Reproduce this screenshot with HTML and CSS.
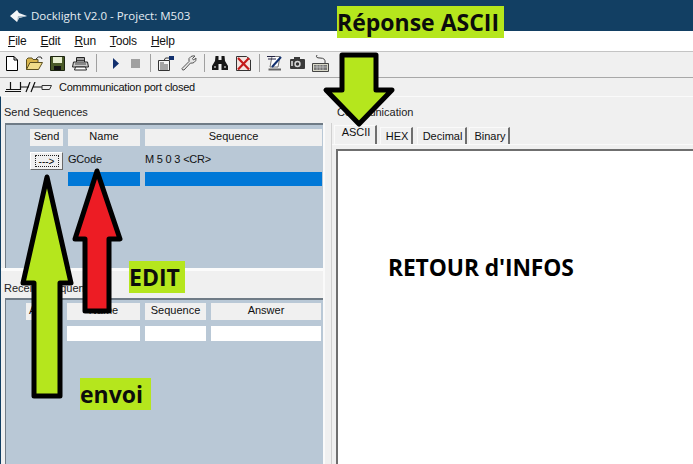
FILE: index.html
```html
<!DOCTYPE html>
<html lang="en">
<head>
    <meta charset="UTF-8">
    <title>Docklight V2.0 - Project: M503</title>
    <link rel="stylesheet" href="styles.css">
</head>
<body>
    <div class="app">
        <div class="titlebar">
            <svg class="logo" width="17" height="12" viewBox="0 0 17 12">
                <path d="M0 6 L7 0 L9 3 L17 6 L9 8 L7 12 Z" fill="#f2f5f7"/>
                <path d="M8 6 L17 6 L9 8 L7 12 Z" fill="#a9bac6"/>
            </svg>
            <span>Docklight V2.0 - Project: M503</span>
        </div>

        <div class="menubar">
            <span class="menu-item"><u>F</u>ile</span>
            <span class="menu-item"><u>E</u>dit</span>
            <span class="menu-item"><u>R</u>un</span>
            <span class="menu-item"><u>T</u>ools</span>
            <span class="menu-item"><u>H</u>elp</span>
        </div>

        <div class="toolbar">
            <span class="tool"><svg width="12" height="15" viewBox="0 0 12 15"><path d="M.5.5 H8 L11.5 4 V14.5 H.5 Z M8 .5 V4 H11.5" fill="#fff" stroke="#000"/></svg></span>
            <span class="tool"><svg width="17" height="14" viewBox="0 0 17 14"><path d="M.5 13.5 V3.5 L2 2 H6 L7 3.5 H12 V13.5 Z" fill="#d9b64e" stroke="#5c5020"/><path d="M.5 13.5 L4 6.5 H16.5 L12.5 13.5 Z" fill="#f0dc8a" stroke="#5c5020"/><path d="M10 3 Q12 0 15 1 L16 3" fill="none" stroke="#333"/></svg></span>
            <span class="tool"><svg width="15" height="15" viewBox="0 0 15 15"><path d="M.5.5 H14.5 V14.5 H.5 Z" fill="#4a5a28" stroke="#1c2410"/><rect x="3" y="1" width="9" height="6" fill="#e8efd0"/><rect x="4" y="10" width="7" height="4" fill="#111"/></svg></span>
            <span class="tool"><svg width="17" height="15" viewBox="0 0 17 15"><path d="M4.5 6 V1.5 H12.5 V6" fill="#fff" stroke="#222"/><path d="M1.5 6 H15.5 L16.5 11 H.5 Z" fill="#ccc" stroke="#222"/><path d="M3.5 11 H13.5 L14.5 14 H2.5 Z" fill="#fff" stroke="#222"/><path d="M5 3 H12 M5 4.5 H12 M3 8 H14" stroke="#444"/></svg></span>
            <span class="tool-sep"></span>
            <span class="tool tool-narrow tool-first"><svg width="6" height="11" viewBox="0 0 6 11"><path d="M0 0 L6 5.5 L0 11 Z" fill="#12306e"/></svg></span>
            <span class="tool tool-narrow"><svg width="9" height="9" viewBox="0 0 9 9"><rect width="9" height="9" fill="#a0a0a0"/></svg></span>
            <span class="tool-sep"></span>
            <span class="tool"><svg width="18" height="16" viewBox="0 0 18 16"><path d="M1.5 5.5 H12.5 V15.5 H1.5 Z" fill="#f4f4f4" stroke="#333"/><path d="M3 8 H7 M3 10 H11 M3 12 H11 M3 14 H11" stroke="#555"/><path d="M7 5.5 L8.5 3 H12" fill="none" stroke="#333"/><path d="M12 1 H17 V5 H12 Z" fill="#12306e"/></svg></span>
            <span class="tool"><svg width="16" height="16" viewBox="0 0 16 16"><path d="M1 13.5 L8 6.5 Q7 3 10 1.5 Q12 .5 14 1 L11.5 3.5 L12.5 5 L15 3 Q15.5 6 13 7.5 Q11 8.5 9.5 8 L3 15 Q1 15.5 1 13.5 Z" fill="#e6e6e6" stroke="#555"/></svg></span>
            <span class="tool-sep"></span>
            <span class="tool"><svg width="16" height="14" viewBox="0 0 16 14"><path d="M3.5 0 H6.5 V4 H9.5 V0 H12.5 L13 5 L16 10 V14 H9.5 V8 H6.5 V14 H0 V10 L3 5 Z" fill="#161616"/><rect x="2" y="10" width="2" height="2" fill="#8a8a8a"/><rect x="12" y="10" width="2" height="2" fill="#8a8a8a"/></svg></span>
            <span class="tool"><svg width="15" height="15" viewBox="0 0 15 15"><path d="M.5.5 H10.5 L14.5 4 V14.5 H.5 Z" fill="#f3e4e0" stroke="#333"/><path d="M2 2 L13 13.5 M13 2 L2 13.5" stroke="#c41a1a" stroke-width="2.2"/></svg></span>
            <span class="tool-sep"></span>
            <span class="tool"><svg width="17" height="16" viewBox="0 0 17 16"><path d="M4 12 L6 1.5 H14 L12 12 Z" fill="#fff" stroke="#777"/><path d="M1 1.5 H9 M2 4 H10" stroke="#224"/><path d="M6 12 L15 2" stroke="#12306e" stroke-width="2"/><path d="M2.5 14.5 H15" stroke="#666" stroke-width="2"/></svg></span>
            <span class="tool"><svg width="15" height="12" viewBox="0 0 15 12"><rect y="2" width="15" height="10" rx="1" fill="#3a3a3a"/><rect x="4" width="6" height="3" fill="#3a3a3a"/><circle cx="7.5" cy="7" r="3.2" fill="#d8d8d8"/><circle cx="7.5" cy="7" r="1.7" fill="#333"/><rect x="1" y="4" width="2" height="5" fill="#bbb"/></svg></span>
            <span class="tool"><svg width="17" height="17" viewBox="0 0 17 17"><path d="M5 0 Q3 3 8 3 Q14 3 13 8" fill="none" stroke="#444"/><path d="M.5 8.5 H16.5 V16.5 H.5 Z" fill="#d8d8c8" stroke="#444"/><rect x="2" y="10" width="13" height="5" fill="#777"/><path d="M2 12 H15 M5 10 V15 M8 10 V15 M11 10 V15" stroke="#ddd" stroke-width=".6"/></svg></span>
        </div>

        <div class="statusbar">
            <svg width="47" height="11" viewBox="0 0 47 11">
                <path d="M0 9.5 H16 M1 7.5 H5 M5.5 0 V8 M5 7.5 H15 M15.5 0 V8 M16 5 H24 M21 10 L25 0 M26 10 L30 0 M28 5 H38" fill="none" stroke="#111" stroke-width="1.2"/>
                <path d="M37 3.5 H46.5 L44.5 7.5 H37 Z" fill="#f0f0f0" stroke="#333"/>
            </svg>
            <span>Commmunication port closed</span>
        </div>

        <div class="workspace">
            <div class="left-col">
                <div class="group-label group-label-first">Send Sequences</div>
                <div class="panel panel-send">
                    <div class="send-row send-head">
                        <div class="cell cell-send">Send</div>
                        <div class="cell cell-name">Name</div>
                        <div class="cell cell-seq">Sequence</div>
                    </div>
                    <div class="send-row send-data">
                        <button class="send-btn"><span>---&gt;</span></button>
                        <div class="cell-name cell-plain">GCode</div>
                        <div class="cell-seq cell-plain">M 5 0 3 &lt;CR&gt;</div>
                    </div>
                    <div class="send-row send-new">
                        <div class="cell-send"></div>
                        <div class="cell-name cell-selected"></div>
                        <div class="cell-seq cell-selected"></div>
                    </div>
                </div>

                <div class="group-label group-label-second">Receive Sequences</div>
                <div class="panel panel-receive">
                    <div class="receive-row receive-head">
                        <div class="cell">Active</div>
                        <div class="cell">Name</div>
                        <div class="cell">Sequence</div>
                        <div class="cell">Answer</div>
                    </div>
                    <div class="receive-row receive-new">
                        <div></div>
                        <div class="cell-empty"></div>
                        <div class="cell-empty"></div>
                        <div class="cell-empty"></div>
                    </div>
                </div>
            </div>

            <div class="splitter"></div>

            <div class="right-col">
                <div class="group-label group-label-first">Communication</div>
                <div class="tabs">
                    <span class="tab tab-active">ASCII</span>
                    <span class="tab tab-hex">HEX</span>
                    <span class="tab tab-decimal">Decimal</span>
                    <span class="tab tab-binary">Binary</span>
                </div>
                <div class="comm-output">
                    <div class="comm-note">RETOUR d'INFOS</div>
                </div>
            </div>
        </div>

        <!-- annotations painted over the screenshot -->
        <svg class="arrows" width="693" height="464" viewBox="0 0 693 464">
            <path d="M342 55 H376 V90 H392 L359 124 L326 90 H342 Z" fill="#b5e61d" stroke="#000" stroke-width="5" stroke-linejoin="round"/>
            <path d="M47 177 L71 283 H60 V396 H34 V283 H23 Z" fill="#b5e61d" stroke="#000" stroke-width="5" stroke-linejoin="round"/>
            <path d="M97 171 L120 239 H109 V311 H85 V239 H75 Z" fill="#ed1c24" stroke="#000" stroke-width="5" stroke-linejoin="round"/>
        </svg>
        <div class="tag tag-reponse">Réponse ASCII</div>
        <div class="tag tag-edit">EDIT</div>
        <div class="tag tag-envoi">envoi</div>
    </div>
</body>
</html>
```

FILE: styles.css
```css
body {
    margin: 0;
    font-family: "Liberation Sans", Arial, sans-serif;
    font-size: 11px;
    color: #111;
    background: #f0f0f0;
    overflow: hidden;
}

.app {
    position: relative;
    display: flex;
    flex-direction: column;
    width: 693px;
    height: 464px;
    overflow: hidden;
}

.titlebar {
    display: flex;
    align-items: center;
    gap: 4px;
    height: 31px;
    padding-left: 10px;
    background: #123f63;
    color: #e6edf2;
    font-family: "Open Sans", sans-serif;
    font-size: 11.5px;
    flex: none;
}

.menubar {
    display: flex;
    align-items: center;
    height: 20px;
    padding-left: 8px;
    gap: 14px;
    background: #fff;
    font-size: 12px;
    letter-spacing: -0.2px;
    flex: none;
}

.toolbar {
    display: flex;
    align-items: center;
    height: 22px;
    padding-bottom: 3px;
    background: #f0f0f0;
    border-top: 1px solid #c4c4c4;
    border-bottom: 1px solid #a8a8a8;
    flex: none;
}

.tool {
    display: flex;
    align-items: center;
    justify-content: center;
    width: 23px;
    flex: none;
}

.tool-narrow {
    width: 20px;
}

.tool-first {
    margin-left: 5px;
}

.tool-sep {
    width: 1px;
    height: 18px;
    margin: 0 3.5px 0 4px;
    background: #a0a0a0;
    flex: none;
}

.statusbar {
    display: flex;
    align-items: center;
    gap: 7px;
    height: 18px;
    padding-left: 5px;
    flex: none;
    font-size: 11px;
    letter-spacing: -0.25px;
}

.workspace {
    display: flex;
    flex: 1;
    border-top: 1px solid #fafafa;
    border-left: 1px solid #123f63;
    min-height: 0;
}

.left-col {
    display: flex;
    flex-direction: column;
    width: 322px;
    flex: none;
}

.group-label {
    font-size: 11px;
    color: #222;
}

.group-label-first {
    height: 26px;
    padding: 8px 0 0 3px;
    box-sizing: border-box;
    line-height: 14px;
}

.group-label-second {
    height: 30px;
    padding: 10px 0 0 3px;
    box-sizing: border-box;
    line-height: 14px;
    border-top: 3px solid #fbfbfb;
}

.panel {
    margin-left: 4px;
    background: #b9c8d6;
    border-top: 2px solid #6f7b86;
    border-left: 1px solid #6f7b86;
    box-sizing: border-box;
}

.panel-send {
    height: 145px;
    padding: 4px 0 0 24px;
}

.panel-receive {
    flex: 1;
    padding: 3px 0 0 20px;
}

.send-row {
    display: grid;
    grid-template-columns: 33px 72px 177px;
    column-gap: 5px;
}

.send-head {
    height: 17px;
    margin-bottom: 6px;
}

.send-data {
    height: 18px;
    margin-bottom: 2px;
}

.send-new {
    height: 14px;
}

.cell {
    display: flex;
    align-items: center;
    justify-content: center;
    padding-bottom: 3px;
    box-sizing: border-box;
    background: #f0f0f0;
    font-size: 11px;
}

.cell-plain {
    font-size: 11px;
    letter-spacing: -0.2px;
    line-height: 14px;
}

.cell-selected {
    background: #0078d7;
}

.send-btn {
    display: flex;
    align-items: center;
    justify-content: center;
    width: 33px;
    height: 18px;
    padding: 0;
    background: #f0f0f0;
    border: 1px solid;
    border-color: #fff #696969 #696969 #fff;
    font-family: inherit;
    font-size: 10px;
}

.send-btn span {
    display: block;
    width: 24px;
    height: 12px;
    line-height: 11px;
    box-sizing: border-box;
    border: 1px dotted #222;
}

.receive-row {
    display: grid;
    grid-template-columns: 36px 73px 61px 110px;
    column-gap: 5px;
}

.receive-head {
    height: 17px;
    margin-bottom: 6px;
}

.receive-new {
    height: 15px;
}

.cell-empty {
    background: #fff;
}

.splitter {
    width: 6px;
    margin-top: 26px;
    border-left: 2px solid #fafafa;
    border-right: 1px solid #d0d0d0;
    flex: none;
}

.right-col {
    display: flex;
    flex-direction: column;
    flex: 1;
    min-width: 0;
}

.right-col .group-label-first {
    padding-left: 5px;
    height: 28px;
}

.tabs {
    display: flex;
    align-items: flex-end;
    height: 19px;
    padding-left: 2px;
    border-bottom: 1px solid #fafafa;
    flex: none;
}

.tab {
    display: flex;
    align-items: center;
    justify-content: center;
    height: 16px;
    margin-right: 3px;
    padding-left: 2px;
    border-top: 1px solid #fafafa;
    border-left: 1px solid #fafafa;
    border-right: 2px solid #6f6f6f;
    font-size: 11px;
}

.tab-active {
    height: 18px;
    width: 38px;
    align-items: flex-start;
}

.tab-hex {
    width: 28px;
    margin-right: 4px;
}

.tab-decimal {
    width: 45px;
    margin-right: 2px;
}

.tab-binary {
    width: 36px;
}

.comm-output {
    flex: 1;
    margin: 4px 0 0 4px;
    background: #fff;
    border-top: 2px solid #6f6f6f;
    border-left: 2px solid #6f6f6f;
}

.comm-note {
    margin: 104px 0 0 50px;
    font-family: "Open Sans", sans-serif;
    font-size: 22.8px;
    font-weight: 700;
    line-height: 26px;
    letter-spacing: -0.1px;
    color: #000;
}

.arrows {
    position: absolute;
    left: 0;
    top: 0;
}

.tag {
    position: absolute;
    display: flex;
    align-items: center;
    height: 32px;
    box-sizing: border-box;
    background: #b5e61d;
    color: #0c0c0c;
    font-family: "Open Sans", sans-serif;
    font-weight: 700;
    font-size: 23px;
    white-space: nowrap;
}

.tag-reponse {
    left: 337px;
    top: 6px;
    width: 167px;
}

.tag-edit {
    left: 129px;
    top: 261px;
    width: 56px;
}

.tag-envoi {
    left: 80px;
    top: 378px;
    width: 71px;
}
```
